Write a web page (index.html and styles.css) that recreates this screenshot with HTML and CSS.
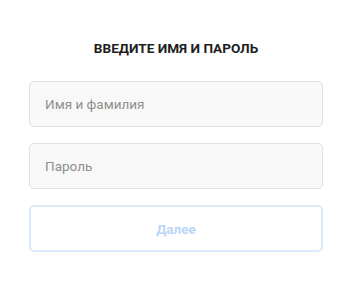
FILE: index.html
```html
<!DOCTYPE html>
<html>

<head>
  <meta charset="utf-8" />
  <title>Вход</title>
  <link rel="stylesheet" href="styles.css">
</head>

<body>
  <div class="form">
    <h1 class="form-title">ВВЕДИТЕ ИМЯ И ПАРОЛЬ</h1>
    <input class="field" type="text" placeholder="Имя и фамилия">
    <input class="field" type="password" placeholder="Пароль">
    <button class="next" disabled>Далее</button>
  </div>
</body>

</html>
```

FILE: styles.css
```css
* {
  margin: 0;
  padding: 0;
  box-sizing: border-box;
  font-family: "Roboto", "Liberation Sans", sans-serif;
}

html,
body {
  width: 100%;
  height: 100%;
  background-color: #fff;
}

.form {
  display: flex;
  flex-direction: column;
  padding: 40px 29px 0 29px;
}

.form-title {
  font-size: 13.6px;
  font-weight: bold;
  color: #1e1e1e;
  text-align: center;
  line-height: 16px;
  margin-bottom: 25px;
}

.field {
  height: 46px;
  width: 100%;
  border: 1px solid #e1e1e1;
  border-radius: 5px;
  background-color: #f8f8f8;
  padding: 0 15px;
  font-size: 13.5px;
  color: #222;
  margin-bottom: 16px;
  outline: none;
}

.field::placeholder {
  color: #8f8f8f;
}

.next {
  height: 47px;
  width: 100%;
  border: 2px solid #dbeafb;
  border-radius: 5px;
  background-color: #fff;
  font-size: 13.5px;
  font-weight: bold;
  color: #b9d6f6;
}
```
